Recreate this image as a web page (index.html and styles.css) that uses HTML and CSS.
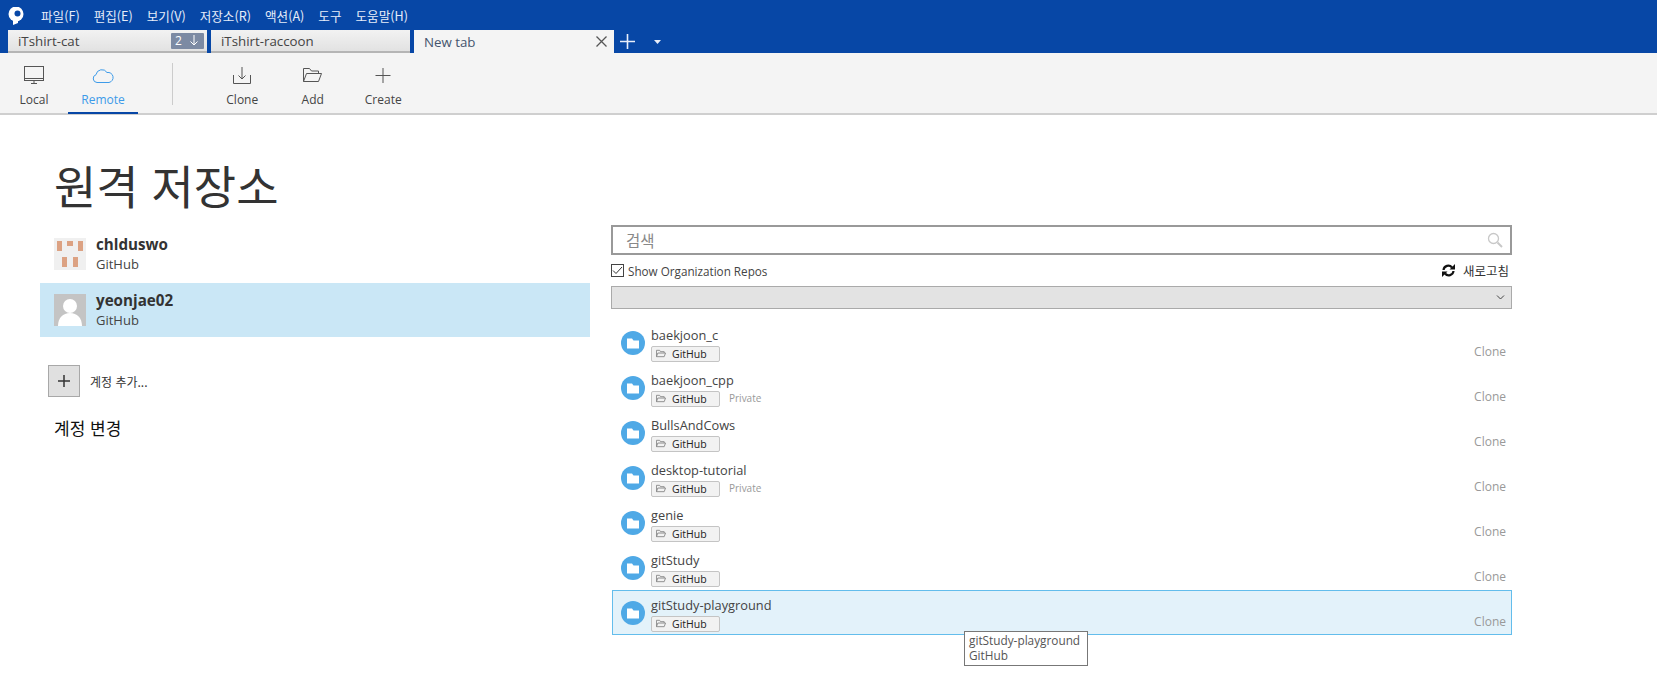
FILE: index.html
```html
<!DOCTYPE html>
<html lang="ko">
<head>
<meta charset="utf-8">
<title>Sourcetree</title>
<link rel="stylesheet" href="styles.css">
</head>
<body>
<header class="top">
  <div class="menubar">
    <svg class="logo" width="16" height="18" viewBox="0 0 16 18"><circle cx="8" cy="7" r="7.500" fill="#fff"/><path d="M5 12h5v4l-5 2z" fill="#fff"/><circle cx="9.500" cy="6.500" r="3" fill="#0747a6"/></svg>
    <span>파일(F)</span><span>편집(E)</span><span>보기(V)</span><span>저장소(R)</span><span>액션(A)</span><span>도구</span><span>도움말(H)</span>
  </div>
  <div class="tabs">
    <div class="tab"><span class="tab-name">iTshirt-cat</span><span class="badge">2 <svg width="10" height="11" viewBox="0 0 10 11"><path d="M5 0v10M1.500 6.500 5 10l3.500-3.500" fill="none" stroke="#fff"/></svg></span></div>
    <div class="tab"><span class="tab-name">iTshirt-raccoon</span></div>
    <div class="tab active"><span class="tab-name">New tab</span><svg width="11" height="11" viewBox="0 0 11 11"><path d="M.5.5l10 10M10.500.5l-10 10" stroke="#555" stroke-width="1.300"/></svg></div>
    <svg class="newtab" width="15" height="15" viewBox="0 0 15 15"><path d="M7.500 0v15M0 7.500h15" stroke="#e8eefa" stroke-width="1.600"/></svg>
    <svg class="tabmenu" width="7" height="4" viewBox="0 0 7 4"><path d="M0 0h7L3.500 4z" fill="#e8eefa"/></svg>
  </div>
</header>
<nav class="toolbar">
  <div class="tool tool-local">
    <svg width="22" height="20" viewBox="0 0 22 20" fill="none" stroke="#555"><rect x="1.500" y=".5" width="19" height="14"/><path d="M1.500 12.500h19M8 17.500h6M11 15v2"/></svg>
    <span>Local</span>
  </div>
  <div class="tool tool-remote">
    <svg width="22" height="20" viewBox="0 0 22 20" fill="none" stroke="#3d9be9"><path d="M5 16.500a4 4 0 0 1-1-7.800A6 6 0 0 1 15 6.500a4.500 4.500 0 0 1 2 10z"/></svg>
    <span>Remote</span>
  </div>
  <div class="tool-sep"></div>
  <div class="tool tool-action">
    <svg width="22" height="20" viewBox="0 0 22 20" fill="none" stroke="#555"><path d="M2.500 9v8.500h17V9M11 1v12M7.500 9.500 11 13l3.500-3.500"/></svg>
    <span>Clone</span>
  </div>
  <div class="tool tool-action">
    <svg width="22" height="20" viewBox="0 0 22 20" fill="none" stroke="#555"><path d="M1.500 15.500V2.500h6l2 2.500h7v2.500M1.500 15.500l3-8h15l-3 8z"/></svg>
    <span>Add</span>
  </div>
  <div class="tool tool-action">
    <svg width="22" height="20" viewBox="0 0 22 20" fill="none" stroke="#555"><path d="M11 2v15M3.500 9.500h15"/></svg>
    <span>Create</span>
  </div>
</nav>
<main class="page">
  <h1 class="title">원격 저장소</h1>
  <div class="columns">
    <section class="accounts">
      <div class="account">
        <svg class="avatar" viewBox="0 0 32 32"><rect width="32" height="32" fill="#f0f0f0"/><path d="M3 3h5v10H3zM13 3h6v5h-6zM24 3h5v10h-5zM8 19h5v10H8zM19 19h5v10h-5z" fill="#dca283"/></svg>
        <div class="account-text"><strong>chlduswo</strong><span>GitHub</span></div>
      </div>
      <div class="account selected">
        <svg class="avatar" viewBox="0 0 32 32"><rect width="32" height="32" fill="#c4c4c4"/><circle cx="16" cy="12" r="7" fill="#fff"/><path d="M4 32c0-8 5-13 12-13s12 5 12 13z" fill="#fff"/></svg>
        <div class="account-text"><strong>yeonjae02</strong><span>GitHub</span></div>
      </div>
      <div class="add-row">
        <div class="add-btn"><svg width="12" height="12" viewBox="0 0 12 12"><path d="M6 0v12M0 6h12" stroke="#333" stroke-width="1.500"/></svg></div>
        <span>계정 추가...</span>
      </div>
      <div class="change">계정 변경</div>
    </section>
    <section class="repos">
      <div class="search">
        <span>검색</span>
        <svg width="16" height="16" viewBox="0 0 16 16" fill="none" stroke="#c8c8c8"><circle cx="6.500" cy="6.500" r="5" stroke-width="1.300"/><path d="M10.500 10.500l4.500 4.500" stroke-width="2"/></svg>
      </div>
      <div class="options">
        <label class="check">
          <span class="box"><svg width="11" height="9" viewBox="0 0 11 9"><path d="M1 4.500 4 7.500 10 1" fill="none" stroke="#333"/></svg></span>
          Show Organization Repos
        </label>
        <div class="refresh">
          <svg width="13" height="13" viewBox="0 0 13 13" fill="none" stroke="#111" stroke-width="2.200"><path d="M1.500 6a4.800 4.800 0 0 1 8.500-2.500M11.500 7a4.800 4.800 0 0 1-8.500 2.500"/><path d="M13 0v5.500H7.500zM0 13V7.500h5.500z" fill="#111" stroke="none"/></svg>
          <span>새로고침</span>
        </div>
      </div>
      <div class="select"><svg width="9" height="5" viewBox="0 0 9 5"><path d="M1 .5l3.500 3.500L8 .5" fill="none" stroke="#444"/></svg></div>
      <ul class="repo-list">
        <li class="repo">
          <svg class="repo-icon"><use href="#folder-dot"/></svg>
          <div class="repo-main"><div class="repo-name">baekjoon_c</div><div class="repo-meta"><span class="chip"><svg class="chip-icon"><use href="#folder-open"/></svg>GitHub</span></div></div>
          <span class="clone">Clone</span>
        </li>
        <li class="repo">
          <svg class="repo-icon"><use href="#folder-dot"/></svg>
          <div class="repo-main"><div class="repo-name">baekjoon_cpp</div><div class="repo-meta"><span class="chip"><svg class="chip-icon"><use href="#folder-open"/></svg>GitHub</span><span class="private">Private</span></div></div>
          <span class="clone">Clone</span>
        </li>
        <li class="repo">
          <svg class="repo-icon"><use href="#folder-dot"/></svg>
          <div class="repo-main"><div class="repo-name">BullsAndCows</div><div class="repo-meta"><span class="chip"><svg class="chip-icon"><use href="#folder-open"/></svg>GitHub</span></div></div>
          <span class="clone">Clone</span>
        </li>
        <li class="repo">
          <svg class="repo-icon"><use href="#folder-dot"/></svg>
          <div class="repo-main"><div class="repo-name">desktop-tutorial</div><div class="repo-meta"><span class="chip"><svg class="chip-icon"><use href="#folder-open"/></svg>GitHub</span><span class="private">Private</span></div></div>
          <span class="clone">Clone</span>
        </li>
        <li class="repo">
          <svg class="repo-icon"><use href="#folder-dot"/></svg>
          <div class="repo-main"><div class="repo-name">genie</div><div class="repo-meta"><span class="chip"><svg class="chip-icon"><use href="#folder-open"/></svg>GitHub</span></div></div>
          <span class="clone">Clone</span>
        </li>
        <li class="repo">
          <svg class="repo-icon"><use href="#folder-dot"/></svg>
          <div class="repo-main"><div class="repo-name">gitStudy</div><div class="repo-meta"><span class="chip"><svg class="chip-icon"><use href="#folder-open"/></svg>GitHub</span></div></div>
          <span class="clone">Clone</span>
        </li>
        <li class="repo hover">
          <svg class="repo-icon"><use href="#folder-dot"/></svg>
          <div class="repo-main"><div class="repo-name">gitStudy-playground</div><div class="repo-meta"><span class="chip"><svg class="chip-icon"><use href="#folder-open"/></svg>GitHub</span></div></div>
          <span class="clone">Clone</span>
        </li>
      </ul>
    </section>
  </div>
</main>
<div class="tooltip">gitStudy-playground<br>GitHub</div>
<svg class="defs" width="0" height="0">
  <defs>
    <symbol id="folder-dot" viewBox="0 0 24 24"><circle cx="12" cy="12" r="12" fill="#4fa9e6"/><path d="M6 7.500h5l1.500 2H18v8H6z" fill="#fff"/></symbol>
    <symbol id="folder-open" viewBox="0 0 11 9"><path d="M.5 8V1h3.500l1 1.500h4V4M.5 8l1.500-4h8.500L9 8z" fill="none" stroke="#888"/></symbol>
  </defs>
</svg>
</body>
</html>
```
FILE: styles.css
```css
* { box-sizing: border-box; }
html, body { margin: 0; height: 100%; }
body {
  position: relative;
  overflow: hidden;
  background: #fff;
  color: #333;
  font-family: "Open Sans", "Noto Sans CJK KR", sans-serif;
  font-size: 12px;
}
.top { background: #0747a6; height: 53px; }
.menubar {
  height: 30px;
  display: flex;
  align-items: center;
  gap: 14px;
  padding-left: 8px;
  color: #e6edf9;
  font-family: "Noto Sans CJK KR", sans-serif;
  font-size: 12.600px;
}
.logo { margin-right: 3px; margin-top: 1px; }
.tabs { height: 23px; display: flex; align-items: stretch; padding-left: 8px; gap: 4px; }
.tab {
  width: 199px;
  display: flex;
  align-items: center;
  justify-content: space-between;
  padding: 0 3px 0 10px;
  background: linear-gradient(#f2f2f2, #e2e2e2);
  border-bottom: 2px solid #b5b5b5;
  font-size: 13.300px;
  color: #444;
}
.badge {
  width: 33px;
  height: 16px;
  background: #7c8aa3;
  color: #fff;
  font-size: 12px;
  display: flex;
  align-items: center;
  gap: 7px;
  padding-left: 4px;
  border-radius: 1px;
}
.tab.active {
  width: 200px;
  background: #f4f4f4;
  border-bottom: none;
  padding: 0 7px 0 10px;
  color: #45556e;
}
.newtab { align-self: center; margin-left: 2px; }
.tabmenu { align-self: center; margin-left: 15px; }
.toolbar {
  height: 62px;
  background: #f4f4f4;
  border-bottom: 2px solid #cfcfcf;
  display: flex;
  align-items: stretch;
}
.tool {
  display: flex;
  flex-direction: column;
  align-items: center;
  padding-top: 13px;
  gap: 5px;
  font-size: 12px;
  color: #444;
}
.tool-local { width: 68px; }
.tool-remote { width: 70px; color: #3d9be9; border-bottom: 2px solid #0747a6; margin-bottom: -1px; }
.tool-sep { width: 1px; height: 42px; margin: 10px 34px 0 34px; background: #ccc; }
.tool-action { width: 70.500px; }
.title {
  margin: 0;
  padding: 39px 0 0 54px;
  height: 111px;
  font-family: "Noto Sans CJK KR", sans-serif;
  font-size: 46px;
  line-height: 60px;
  font-weight: 400;
  color: #333;
}
.columns { display: flex; padding-left: 40px; }
.accounts { width: 550px; margin-right: 21px; padding-top: 1px; }
.account {
  height: 54px;
  display: flex;
  align-items: center;
  gap: 10px;
  padding-left: 14px;
  margin-bottom: 2px;
}
.account.selected { background: #cae7f6; margin-bottom: 0; }
.avatar { width: 32px; height: 32px; }
.account-text { display: flex; flex-direction: column; line-height: 20px; }
.account-text strong { font-size: 15.200px; line-height: 21px; color: #333; }
.account-text span { font-size: 13px; line-height: 19px; color: #444; }
.add-row {
  margin: 28px 0 0 8px;
  display: flex;
  align-items: center;
  gap: 10px;
  font-family: "Noto Sans CJK KR", sans-serif;
  font-size: 12px;
}
.add-btn {
  width: 32px;
  height: 32px;
  background: #e0e0e0;
  border: 1px solid #a8a8a8;
  display: flex;
  align-items: center;
  justify-content: center;
}
.change {
  margin: 19px 0 0 14px;
  font-family: "Noto Sans CJK KR", sans-serif;
  font-size: 17px;
  line-height: 24px;
  color: #111;
}
.repos { width: 901px; }
.search {
  height: 30px;
  margin-top: -1px;
  border: 2px solid #999;
  display: flex;
  align-items: center;
  justify-content: space-between;
  padding: 0 7px 0 13px;
  font-family: "Noto Sans CJK KR", sans-serif;
  font-size: 15.500px;
  color: #888;
}
.options {
  height: 31px;
  display: flex;
  align-items: center;
  justify-content: space-between;
  padding-right: 3px;
}
.check { display: flex; align-items: center; gap: 4px; font-size: 11.700px; color: #444; }
.box {
  width: 13px;
  height: 13px;
  border: 1px solid #444;
  display: flex;
  align-items: center;
  justify-content: center;
}
.refresh {
  display: flex;
  align-items: center;
  gap: 8px;
  font-family: "Noto Sans CJK KR", sans-serif;
  font-size: 12.500px;
  color: #333;
}
.select {
  height: 23px;
  background: #e3e3e3;
  border: 1px solid #aaa;
  display: flex;
  align-items: center;
  justify-content: flex-end;
  padding-right: 6px;
}
.repo-list { list-style: none; margin: 11px 0 0; padding: 0; }
.repo {
  height: 45px;
  display: flex;
  align-items: center;
  padding: 0 5px 0 8px;
  margin-left: 1px;
  border: 1px solid transparent;
}
.repo.hover { background: #e3f2fa; border-color: #63bdec; }
.repo-icon { width: 24px; height: 24px; margin-right: 6px; flex: none; }
.repo-main { flex: 1; padding-top: 4px; }
.repo-name { font-size: 12.800px; line-height: 18px; color: #444; margin-top: -2px; margin-bottom: 2px; }
.repo-meta { display: flex; align-items: flex-start; }
.chip {
  width: 69px;
  height: 16px;
  border: 1px solid #c4c4c4;
  border-radius: 2px;
  background: #f2f2f2;
  display: flex;
  align-items: center;
  gap: 6px;
  padding-left: 4px;
  font-size: 10.500px;
  color: #222;
}
.chip-icon { width: 10px; height: 9px; }
.private { font-size: 10px; color: #999; margin-left: 9px; line-height: 14px; }
.clone { font-size: 12px; color: #999; margin-top: 18px; }
.tooltip {
  position: absolute;
  left: 964px;
  top: 631px;
  width: 124px;
  height: 35px;
  border: 1px solid #777;
  background: #fff;
  padding: 1px 4px;
  font-size: 11.800px;
  line-height: 15px;
  color: #555;
  white-space: nowrap;
}
.defs { position: absolute; }
```
